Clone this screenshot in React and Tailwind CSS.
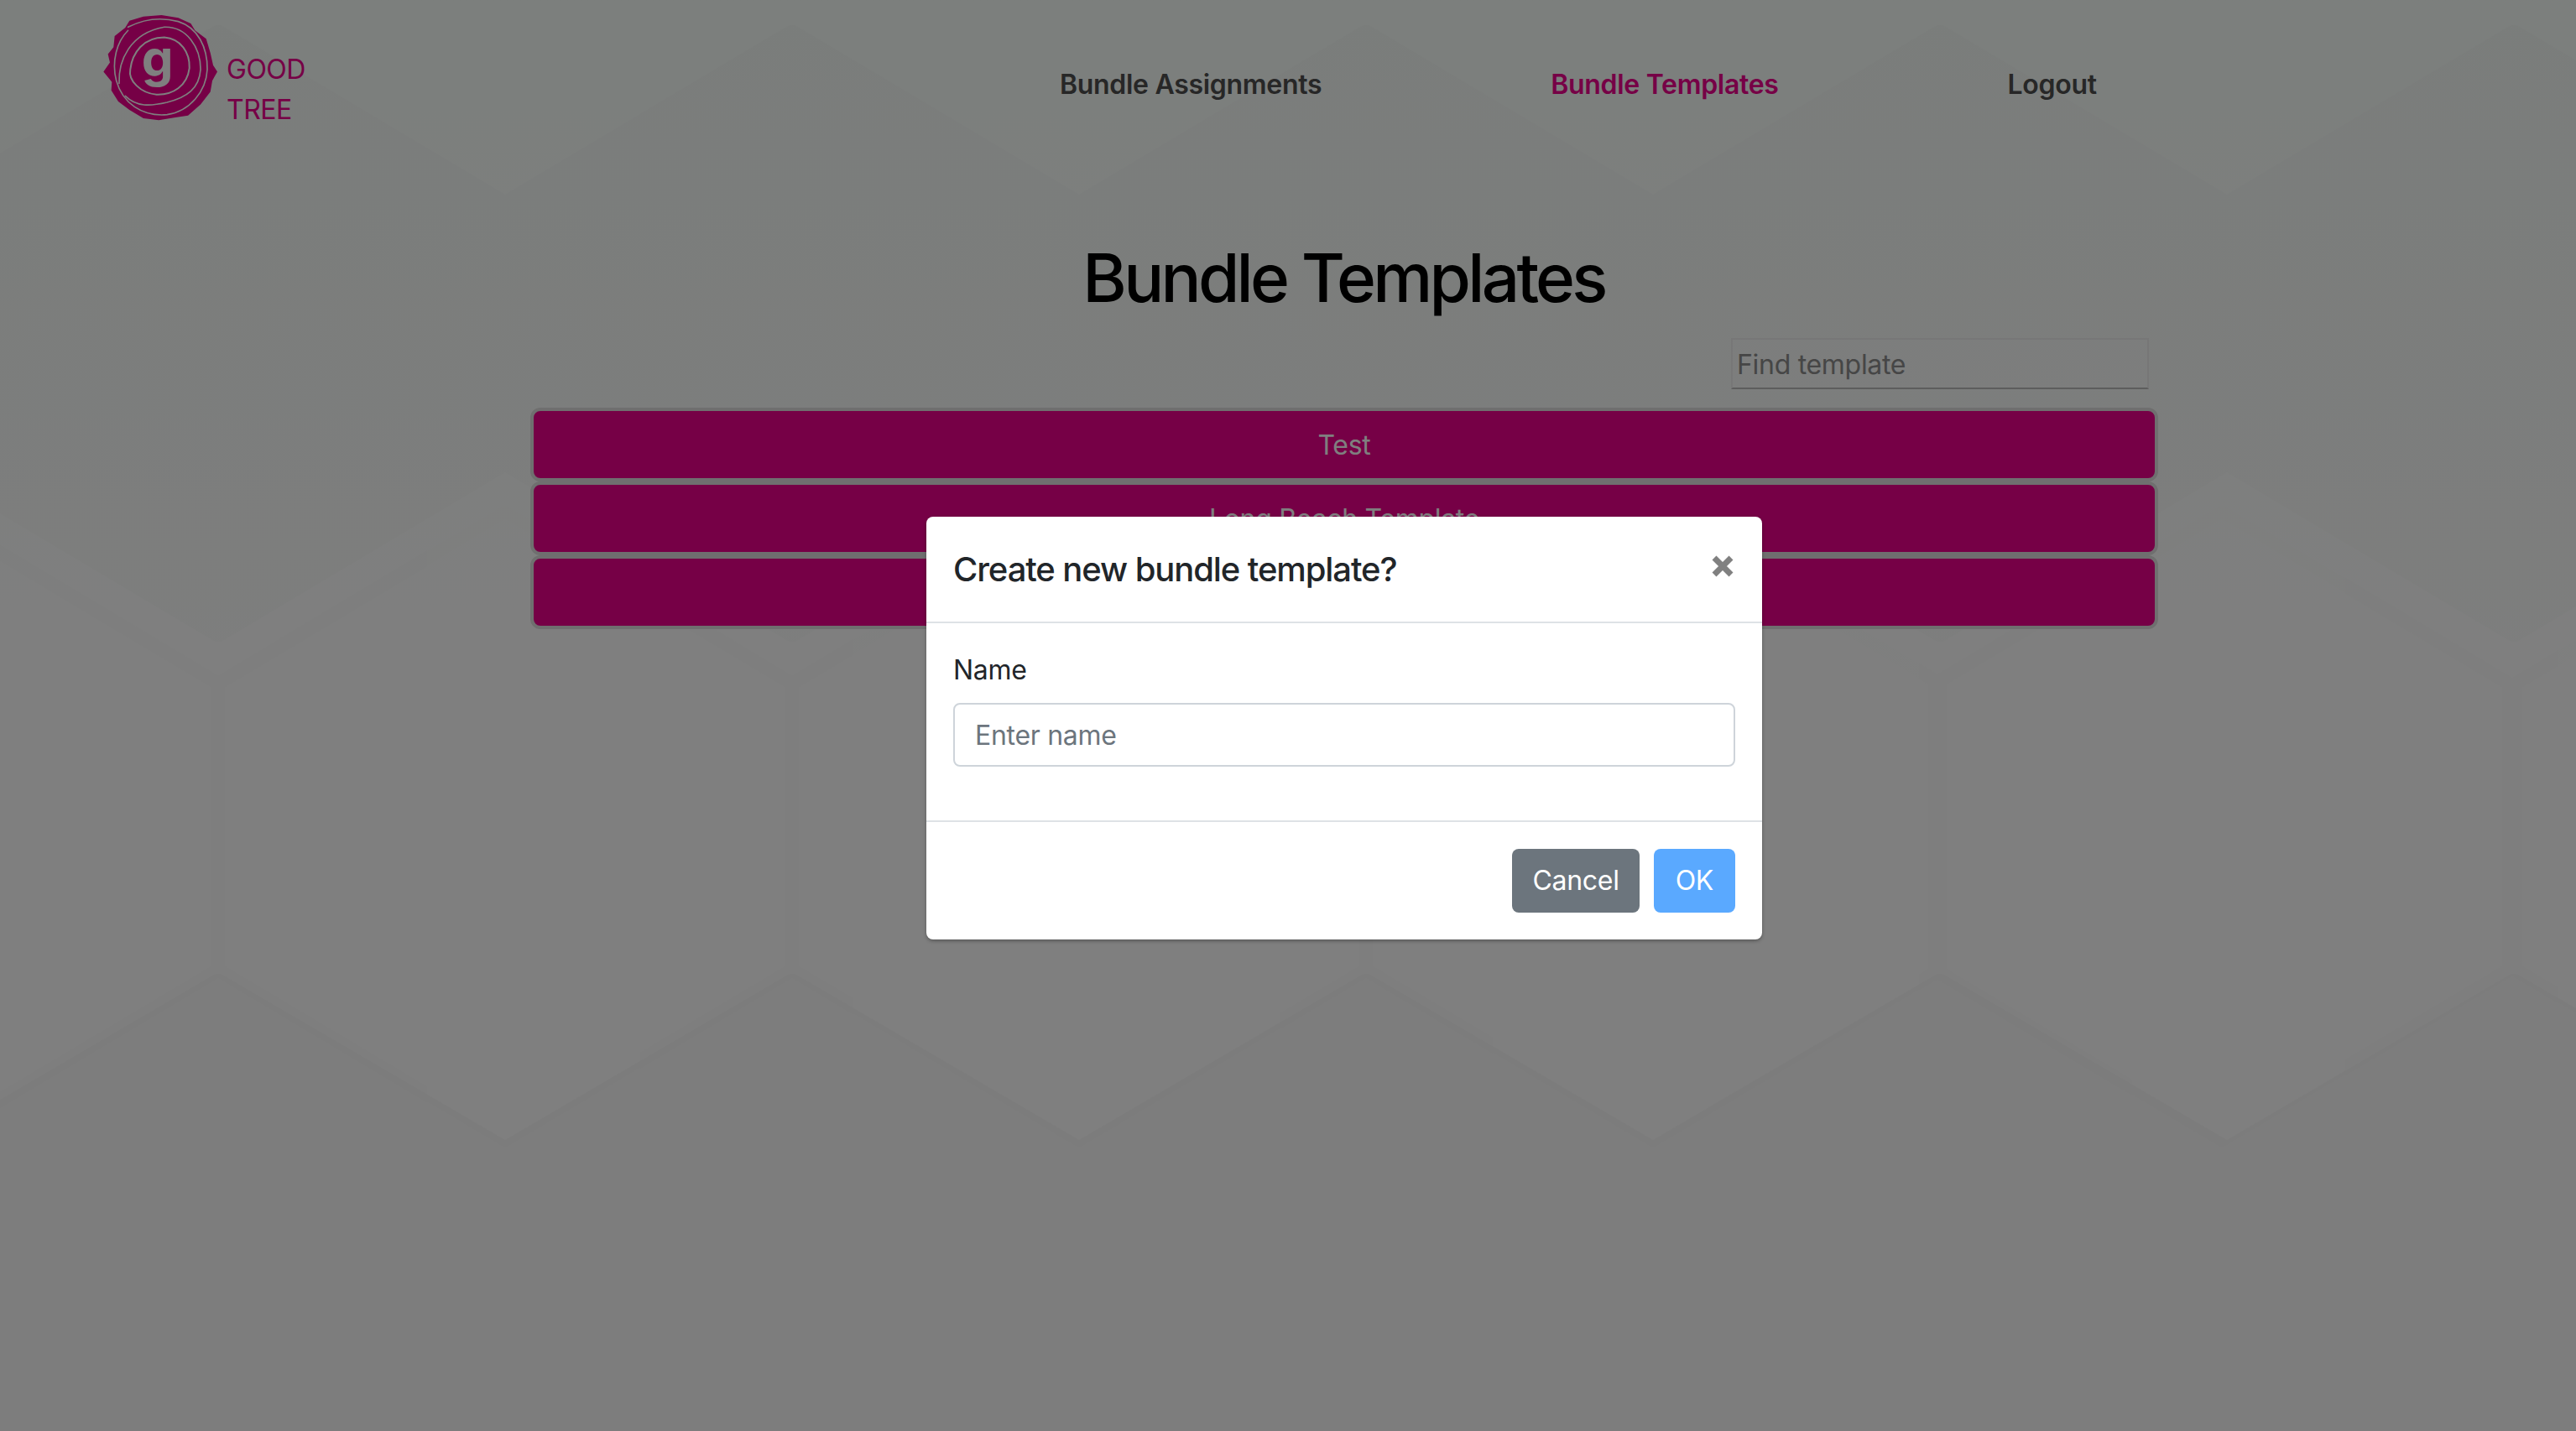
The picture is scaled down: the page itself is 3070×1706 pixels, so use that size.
const templates = ['Test', 'Long Beach Template', 'Orange County Template'];

function Logo() {
  return (
    <svg viewBox="60 40 440 400" className="w-[147px] h-[133px] shrink-0">
      <path
        d="M72 258 L95 225 L88 195 L108 170 L112 130 L150 100 L165 75 L215 60 L280 55 L340 65 L385 85 L400 110 L440 140 L455 190 L465 235 L480 258 L462 290 L455 330 L420 375 L375 415 L330 422 L270 432 L215 425 L165 395 L125 365 L100 325 L102 295 Z"
        fill="#ec008c"
      />
      <g fill="none" stroke="#fff" strokeLinecap="round">
        <path d="M160 98 C215 70 280 62 340 78 C410 100 445 170 444 250 C440 330 380 400 300 412 C210 420 140 370 118 290 C100 220 120 150 160 110" strokeWidth="5" />
        <path d="M128 300 C125 220 165 120 290 98 C370 95 420 170 420 250 C415 320 370 350 300 368 C240 382 190 385 150 345" strokeWidth="5" />
        <path d="M168 250 C175 190 215 135 290 135 C350 140 382 190 380 245 C372 310 320 342 262 340 C205 335 160 290 168 250 Z" strokeWidth="6" />
      </g>
      <text x="265" y="276" textAnchor="middle" fontFamily="Inter, sans-serif" fontWeight="700" fontSize="180" fill="#fff">g</text>
    </svg>
  );
}

function Hexagons() {
  const outer = [260, 944, 1628, 2312, 2996];
  const middle = [-82, 602, 1286, 1970, 2648, 3340];
  const hex = (cx, y0, y1, y2, y3) =>
    `M${cx} ${y0} L${cx + 342} ${y1} L${cx + 342} ${y2} L${cx} ${y3} L${cx - 342} ${y2} L${cx - 342} ${y1} Z`;
  return (
    <svg viewBox="0 0 3070 1706" className="absolute inset-0 w-full h-full">
      <g opacity="0.008" fill="#000" stroke="#000" strokeWidth="24" strokeLinejoin="round">
        {outer.map((cx) => <path key={cx} d={hex(cx, 42, 246, 549, 753)} />)}
      </g>
      <g opacity="0.016" fill="#000" stroke="#000" strokeWidth="24" strokeLinejoin="round">
        {outer.map((cx) => <path key={cx} d={hex(cx, 1173, 1373, 1800, 2000)} />)}
      </g>
      <g opacity="0.004" fill="none" stroke="#000" strokeWidth="16" strokeLinejoin="round">
        {middle.map((cx) => <path key={cx} d={hex(cx, 610, 815, 1156, 1360)} />)}
      </g>
    </svg>
  );
}

export default function App() {
  return (
    <div className="relative w-full h-[1706px] overflow-hidden bg-linear-to-b from-[#f8fefa] to-[#ffffff] to-50% font-['Inter',sans-serif] text-[32px] tracking-[-0.3px] text-[#212529]">
      <Hexagons />

      <div className="relative">
        <header className="flex items-start h-[170px] pl-[119px]">
          <div className="flex items-start pt-[13px]">
            <Logo />
            <div className="ml-[4px] mt-[46px] text-[#ec008c] leading-[48px] tracking-[-0.5px]">
              <div>GOOD</div>
              <div>TREE</div>
            </div>
          </div>
          <nav className="flex gap-[273px] ml-[899px] pt-[77px] font-semibold leading-[48px] text-[#4e4e4e]">
            <span>Bundle Assignments</span>
            <span className="text-[#ec008c]">Bundle Templates</span>
            <span>Logout</span>
          </nav>
        </header>

        <main className="w-[1941px] ml-[631px]">
          <h1 className="mt-[113px] text-center text-[80px] leading-[96px] font-medium tracking-[-3.75px] text-black">
            Bundle Templates
          </h1>
          <div className="flex justify-end mt-[24px] pr-[11px]">
            <input
              readOnly
              placeholder="Find template"
              className="w-[498px] h-[61px] pl-[5px] pt-[2px] bg-white/20 border-2 border-[#eeeeee] border-b-[#bbbbbb] outline-none placeholder:text-[#8c8c8c]"
            />
          </div>
          <div className="flex flex-col mt-[22px] ml-[1px]">
            {templates.map((name) => (
              <button
                key={name}
                className="h-[88px] pt-[2px] border-4 border-[#dedede] rounded-[12px] bg-[#ec008c] text-white text-[32px]"
              >
                {name}
              </button>
            ))}
          </div>
        </main>
      </div>

      {/* backdrop + dialog */}
      <div className="absolute inset-0 bg-black/50 pt-[616px]">
        <div className="w-[996px] ml-[1104px] h-[504px] flex flex-col bg-white rounded-[8px] shadow-[0_2px_4px_rgba(0,0,0,0.3)]">
          <div className="flex justify-between h-[127px] pt-[33px] pl-[32px] pr-[34px] border-b-2 border-[#dee2e6]">
            <h5 className="text-[40px] leading-[60px] font-medium tracking-[-1.1px]">Create new bundle template?</h5>
            <svg viewBox="0 0 26 26" className="w-[26px] h-[26px] mt-[-1px] translate-y-[14px] text-[#808080]">
              <path d="M3 3 L23 23 M23 3 L3 23" stroke="currentColor" strokeWidth="7" fill="none" />
            </svg>
          </div>
          <div className="h-[237px] pt-[32px] px-[32px] border-b-2 border-[#dee2e6]">
            <label className="block leading-[48px] mb-[15px]">Name</label>
            <input
              readOnly
              placeholder="Enter name"
              className="block w-full h-[76px] px-[24px] border-2 border-[#ced4da] rounded-[8px] outline-none placeholder:text-[#6c757d]"
            />
          </div>
          <div className="flex justify-end gap-[17px] px-[32px] pt-[32px]">
            <button className="h-[76px] px-[24px] bg-[#6c757d] text-white rounded-[8px]">Cancel</button>
            <button className="h-[76px] px-[26px] bg-[#5aa9ff] text-white rounded-[8px]">OK</button>
          </div>
        </div>
      </div>
    </div>
  );
}
